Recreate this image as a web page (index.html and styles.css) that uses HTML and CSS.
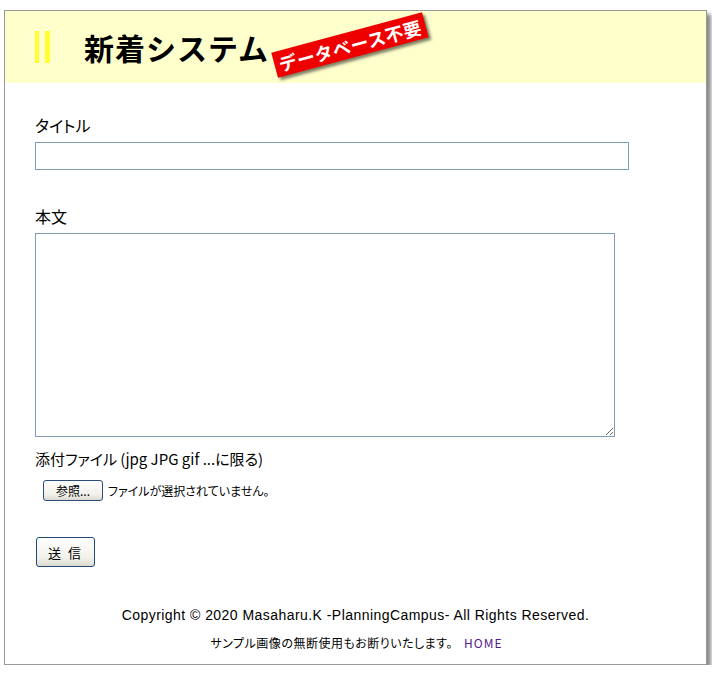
FILE: index.html
```html
<!DOCTYPE html>
<html lang="ja">
<head>
  <meta charset="UTF-8">
  <title>新着システム</title>
  <link rel="stylesheet" href="styles.css">
</head>
<body>
  <div class="frame">
    <div class="header">
      <span class="bars"></span>
      <h1>新着システム</h1>
      <span class="badge">データベース不要</span>
    </div>

    <form class="form" action="#">
      <label class="label" for="title">タイトル</label>
      <input type="text" id="title" class="text-input">

      <label class="label label-gap" for="body">本文</label>
      <textarea id="body" class="text-area"></textarea>

      <p class="label label-file">添付ファイル (jpg JPG gif ...に限る)</p>
      <div class="file-row">
        <button type="button" class="btn btn-file">参照...</button>
        <span class="file-note">ファイルが選択されていません。</span>
      </div>

      <button type="submit" class="btn btn-submit">送 信</button>
    </form>

    <div class="footer">
      <p class="copy">Copyright © 2020 Masaharu.K -PlanningCampus- All Rights Reserved.</p>
      <p class="note">サンプル画像の無断使用もお断りいたします。 <a href="#" class="home">HOME</a></p>
    </div>
  </div>
</body>
</html>
```

FILE: styles.css
```css
* {
  margin: 0;
  padding: 0;
  box-sizing: border-box;
}

body {
  background: #ffffff;
  font-family: "Noto Sans CJK JP", "Liberation Sans", sans-serif;
  color: #000;
}

.frame {
  width: 703px;
  margin: 10px 0 0 4px;
  border: 1px solid #999999;
  background: #ffffff;
  box-shadow: 4px 4px 4px #888888;
  padding-bottom: 11px;
}

.header {
  position: relative;
  height: 72px;
  background: #ffffcc;
  display: flex;
  align-items: center;
  padding-left: 30px;
}

.bars {
  width: 15px;
  height: 32px;
  border-left: 4px solid #ffff33;
  border-right: 5px solid #ffff33;
  margin-right: 34px;
}

h1 {
  font-size: 30px;
  font-weight: bold;
  line-height: 1;
  letter-spacing: 1px;
}

.badge {
  position: absolute;
  left: 267px;
  top: 21px;
  width: 156px;
  height: 26px;
  background: #ee0000;
  color: #ffffff;
  font-size: 18px;
  font-weight: bold;
  line-height: 26px;
  text-align: center;
  letter-spacing: 0.5px;
  transform: rotate(-15deg);
  box-shadow: 2px 3px 3px rgba(0, 0, 0, 0.5);
}

.form {
  padding: 32px 0 0 30px;
}

.label {
  display: block;
  font-size: 16px;
  line-height: 20px;
  font-feature-settings: "palt";
  margin-bottom: 7px;
}

.label-gap {
  margin-top: 36px;
}

.label-file {
  margin-top: 12px;
  margin-bottom: 11px;
  font-size: 15px;
}

.text-input {
  display: block;
  width: 594px;
  height: 28px;
  border: 1px solid #7f9db9;
  font-size: 14px;
  padding: 2px 4px;
}

.text-area {
  display: block;
  width: 580px;
  height: 204px;
  border: 1px solid #7f9db9;
  font-size: 14px;
  padding: 2px;
  resize: both;
}

.file-row {
  display: flex;
  align-items: center;
  padding-left: 8px;
  height: 21px;
}

.btn {
  font-family: "Noto Sans CJK JP", sans-serif;
  background: linear-gradient(to bottom, #fefefe, #f2f1ea 70%, #dcdad0);
  border: 1px solid #2a4d7a;
  border-radius: 3px;
  color: #000;
  cursor: pointer;
}

.btn-file {
  width: 60px;
  height: 21px;
  font-size: 12px;
  line-height: 18px;
}

.file-note {
  font-size: 12px;
  margin-left: 5px;
  font-feature-settings: "palt";
}

.btn-submit {
  display: block;
  margin: 36px 0 0 1px;
  width: 59px;
  height: 30px;
  font-size: 13px;
  letter-spacing: 2px;
  border-color: #1f4a7c;
}

.footer {
  margin-top: 38px;
  text-align: center;
}

.copy {
  font-family: "Liberation Sans", sans-serif;
  font-size: 14px;
  line-height: 20px;
  letter-spacing: 0.45px;
}

.note {
  margin-top: 8px;
  font-size: 12px;
  line-height: 20px;
  font-feature-settings: "palt";
  letter-spacing: 0.5px;
  padding-left: 2px;
}

.home {
  color: #551a8b;
  text-decoration: none;
  margin-left: 8px;
  letter-spacing: 1px;
}
```
